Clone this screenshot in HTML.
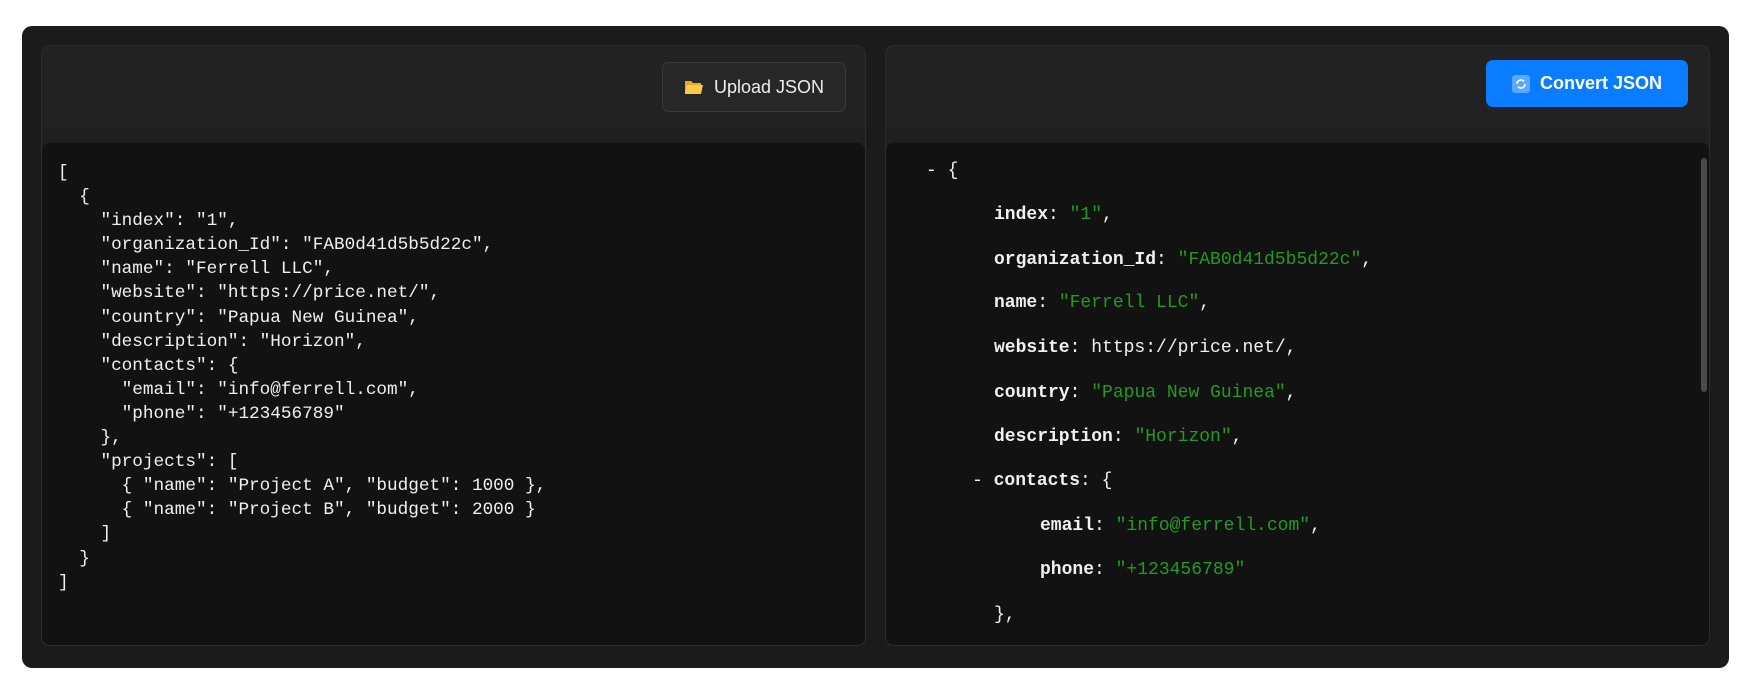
<!DOCTYPE html>
<html><head><meta charset="utf-8"><style>
*{box-sizing:border-box;margin:0;padding:0}
body{width:1756px;height:691px;background:#fff;position:relative;overflow:hidden;font-family:"Liberation Sans",sans-serif}
.outer{position:absolute;left:22px;top:26px;width:1707px;height:642px;background:#1b1b1b;border-radius:10px}
.panel{position:absolute;top:45px;height:601px;background:#1f1f1f;border:1px solid #2c2c2c;border-radius:9px;overflow:hidden}
.hdr{position:absolute;left:0;top:0;right:0;height:82px;background:#222}
.code{position:absolute;left:0;right:0;top:97px;bottom:0;background:#121212;border-radius:8px 8px 0 0;overflow:hidden}
pre{font-family:"Liberation Mono",monospace;font-size:17.7px;line-height:24.1px;color:#f0f0f0;position:absolute;left:16px;top:18px}
.btn{position:absolute;border-radius:7px;font-size:18px;display:flex;align-items:center;justify-content:center;gap:10px}
.up{left:620px;top:16px;width:184px;height:50px;background:#272727;border:1px solid #3a3a3a;color:#eee}
.cv{left:600px;top:14px;width:202px;height:47px;background:#0a7cff;color:#fff;font-weight:bold}
.r{position:absolute;font-family:"Liberation Mono",monospace;font-size:18px;color:#f0f0f0;white-space:pre}
.r b{font-weight:bold}
.g{color:#239a23}
.sb{position:absolute;right:2px;top:15px;width:6px;height:234px;background:#4a4a4a;border-radius:3px}
</style></head><body>
<div class="outer"></div>
<div class="panel" style="left:41px;width:825px">
 <div class="hdr"><div class="btn up"><svg width="20" height="18" viewBox="0 0 20 18"><path d="M1 3h6l2 2h8v11H1z" fill="#e8a82a"/><path d="M3 7h16l-2 9H1z" fill="#fcc84a"/></svg>Upload JSON</div></div>
 <div class="code"><pre>[
  {
    "index": "1",
    "organization_Id": "FAB0d41d5b5d22c",
    "name": "Ferrell LLC",
    "website": "https://price.net/",
    "country": "Papua New Guinea",
    "description": "Horizon",
    "contacts": {
      "email": "info@ferrell.com",
      "phone": "+123456789"
    },
    "projects": [
      { "name": "Project A", "budget": 1000 },
      { "name": "Project B", "budget": 2000 }
    ]
  }
]</pre></div>
</div>
<div class="panel" style="left:885px;width:825px">
 <div class="hdr"><div class="btn cv"><svg width="18" height="18" viewBox="0 0 18 18"><rect width="18" height="18" rx="3" fill="#5aa8ff"/><path d="M5 9a4 4 0 0 1 7-2.6M13 9a4 4 0 0 1-7 2.6" stroke="#fff" stroke-width="1.6" fill="none"/></svg>Convert JSON</div></div>
 <div class="code">
  <div class="r" style="left:40px;top:18px">- {</div>
  <div class="r" style="left:108px;top:62px"><b>index</b>: <span class="g">"1"</span>,</div>
  <div class="r" style="left:108px;top:107px"><b>organization_Id</b>: <span class="g">"FAB0d41d5b5d22c"</span>,</div>
  <div class="r" style="left:108px;top:150px"><b>name</b>: <span class="g">"Ferrell LLC"</span>,</div>
  <div class="r" style="left:108px;top:195px"><b>website</b>: https://price.net/,</div>
  <div class="r" style="left:108px;top:240px"><b>country</b>: <span class="g">"Papua New Guinea"</span>,</div>
  <div class="r" style="left:108px;top:284px"><b>description</b>: <span class="g">"Horizon"</span>,</div>
  <div class="r" style="left:86px;top:328px">- <b>contacts</b>: {</div>
  <div class="r" style="left:154px;top:373px"><b>email</b>: <span class="g">"info@ferrell.com"</span>,</div>
  <div class="r" style="left:154px;top:417px"><b>phone</b>: <span class="g">"+123456789"</span></div>
  <div class="r" style="left:108px;top:462px">},</div>
  <div class="sb"></div>
 </div>
</div>
</body></html>
